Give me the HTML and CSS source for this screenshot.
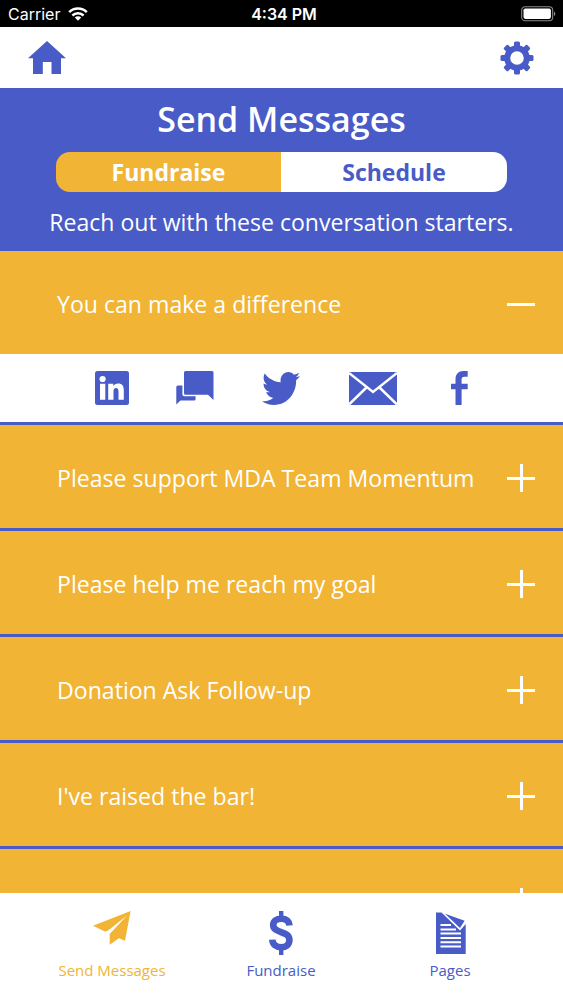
FILE: index.html
```html
<!DOCTYPE html>
<html lang="en">
<head>
    <meta charset="UTF-8">
    <meta name="viewport" content="width=device-width, initial-scale=1.0">
    <title>Send Messages</title>
    <link rel="stylesheet" href="styles.css">
</head>
<body>
    <!-- Status bar -->
    <div class="status-bar">
        <div class="carrier">
            <span>Carrier</span>
            <svg width="20" height="14" viewBox="0 0 20 14" stroke="#fff" stroke-width="2.5">
                <path d="M1.2 5.2a12.6 12.6 0 0 1 17.6 0" fill="none"/>
                <path d="M4.4 8.5a8 8 0 0 1 11.2 0" fill="none"/>
                <path d="M10 13.8l-3.2-3.3a4.6 4.6 0 0 1 6.4 0z" fill="#fff" stroke="none"/>
            </svg>
        </div>
        <div class="time">4:34 PM</div>
        <div class="battery">
            <svg width="35" height="16" viewBox="0 0 35 16">
                <rect x="0.7" y="0.7" width="31" height="14" rx="3.5" fill="none" stroke="#8a8a8a" stroke-width="1.1"/>
                <rect x="2.5" y="2.5" width="27.4" height="10.4" rx="1.8" fill="#fff"/>
                <path d="M33 5.4c1.8.8 1.8 3.8 0 4.6z" fill="#8a8a8a"/>
            </svg>
        </div>
    </div>

    <nav class="top-nav">
        <svg width="38" height="33" viewBox="0 0 38 33">
            <path d="M19 0L38 17.2H33V33H23.5V21H14.8V33H5V17.2H0z"/>
        </svg>
        <svg width="34" height="34" viewBox="-17 -17 34 34">
            <circle r="9.8" fill="none" stroke="#485bc7" stroke-width="6"/>
            <g id="teeth">
                <rect x="-3" y="-16.5" width="6" height="6" rx="1.5"/>
                <rect x="-3" y="10.5" width="6" height="6" rx="1.5"/>
                <rect x="-16.5" y="-3" width="6" height="6" rx="1.5"/>
                <rect x="10.5" y="-3" width="6" height="6" rx="1.5"/>
            </g>
            <use href="#teeth" transform="rotate(45)"/>
        </svg>
    </nav>

    <header class="header">
        <h1>Send Messages</h1>
        <div class="tabs">
            <button class="tab active">Fundraise</button>
            <button class="tab">Schedule</button>
        </div>
        <p>Reach out with these conversation starters.</p>
    </header>

    <!-- Conversation starters -->
    <main class="messages">
        <div class="message open">
            <span>You can make a difference</span>
            <i class="toggle minus"></i>
        </div>
        <div class="share">
            <svg width="34" height="34" viewBox="0 0 34 34">
                <rect width="34" height="34" rx="2.5"/>
                <circle cx="7.6" cy="8" r="3.1" fill="#fff"/>
                <path d="M5 12.8H10.3V28.7H5zM13.2 12.8H18.2V15C19.2 13.3 20.9 12.4 23 12.4C27.3 12.4 28.8 15 28.8 19.4V28.7H23.5V20.6C23.5 18.2 22.8 17 21 17C19.2 17 18.5 18.4 18.5 20.6V28.7H13.2z" fill="#fff"/>
            </svg>
            <svg width="38" height="34" viewBox="0 0 38 34">
                <path d="M9.5 0H36a1.5 1.5 0 0 1 1.5 1.5V29L32 23.7H9.5A1.5 1.5 0 0 1 8 22.2V1.5A1.5 1.5 0 0 1 9.5 0z"/>
                <path d="M6.4 14.5V23.5a1.8 1.8 0 0 0 1.8 1.8H19.6V28a1.5 1.5 0 0 1-1.5 1.5H4.5L.3 33.4V16a1.5 1.5 0 0 1 1.5-1.5z"/>
            </svg>
            <svg width="38" height="33" viewBox="0 48 512 416" preserveAspectRatio="none">
                <path d="M459.37 151.716c.325 4.548.325 9.097.325 13.645 0 138.72-105.583 298.558-298.558 298.558-59.452 0-114.68-17.219-161.137-47.106 8.447.974 16.568 1.299 25.34 1.299 49.055 0 94.213-16.568 130.274-44.832-46.132-.975-84.792-31.188-98.112-72.772 6.498.974 12.995 1.624 19.818 1.624 9.421 0 18.843-1.3 27.614-3.573-48.081-9.747-84.143-51.98-84.143-102.985v-1.299c13.969 7.797 30.214 12.67 47.431 13.319-28.264-18.843-46.781-51.005-46.781-87.391 0-19.492 5.197-37.36 14.294-52.954 51.655 63.675 129.3 105.258 216.365 109.807-1.624-7.797-2.599-15.918-2.599-24.04 0-57.828 46.782-104.934 104.934-104.934 30.213 0 57.502 12.67 76.67 33.137 23.715-4.548 46.456-13.32 66.599-25.34-7.798 24.366-24.366 44.833-46.132 57.827 21.117-2.273 41.584-8.122 60.426-16.243-14.292 20.791-32.161 39.308-52.628 54.253z"/>
            </svg>
            <svg width="48" height="33" viewBox="0 0 48 33">
                <rect width="48" height="33"/>
                <path d="M0 1L24 20L48 1M0 32.5L17.5 15.5M48 32.5L30.5 15.5" fill="none" stroke="#fff" stroke-width="2.5"/>
            </svg>
            <svg width="17" height="34" viewBox="0 0 17 34">
                <path d="M4.5 34V18.2H0V12.7H4.5V8.5C4.5 3 7.5 0 12.3 0H16.7V5.7H13.4C11.3 5.7 10.6 6.8 10.6 8.8V12.7H16.7V18.2H10.6V34z"/>
            </svg>
        </div>
        <div class="message">
            <span>Please support MDA Team Momentum</span>
            <i class="toggle"></i>
        </div>
        <div class="message">
            <span>Please help me reach my goal</span>
            <i class="toggle"></i>
        </div>
        <div class="message">
            <span>Donation Ask Follow-up</span>
            <i class="toggle"></i>
        </div>
        <div class="message">
            <span>I've raised the bar!</span>
            <i class="toggle"></i>
        </div>
        <div class="message">
            <span></span>
            <i class="toggle"></i>
        </div>
    </main>

    <!-- Bottom navigation -->
    <footer class="bottom-nav">
        <a class="nav-item active">
            <svg width="38" height="44" viewBox="0 0 38 44">
                <path d="M37.6 0L0 14.8L11.8 20.4L14.8 19.8L34 4.5L16.7 23V33.8L25.8 27.2L32 29.8z"/>
            </svg>
            <span>Send Messages</span>
        </a>
        <a class="nav-item">
            <svg width="24" height="44" viewBox="0 0 24 44">
                <path d="M20.5 14.5C20 9.8 17 7.8 12.3 7.8C7.5 7.8 4.2 10 4.2 14C4.2 23 20.4 19 20.4 29C20.4 33.8 17 36.2 12.3 36.2C7 36.2 3.6 33.6 3.3 28.6" fill="none" stroke="#485bc7" stroke-width="6.6"/>
                <path d="M10 0h4.4v6h-4.4zM10 38h4.4v6h-4.4z"/>
            </svg>
            <span>Fundraise</span>
        </a>
        <a class="nav-item">
            <svg class="page-icon" width="30" height="44" viewBox="0 0 30 44">
                <path d="M0 1.5H5.5L24 19.5L29.7 13V43H0z"/>
                <path d="M9 2.7L28.6 9.8L24 17z"/>
                <path d="M4.5 14H15M4.5 18.4H20M4.5 22.6H25M4.5 27H25M4.5 31.3H25M4.5 35.6H25" stroke="#fff" stroke-width="2"/>
            </svg>
            <span>Pages</span>
        </a>
    </footer>
</body>
</html>
```
FILE: styles.css
```css
:root {
    --blue: #485bc7;
    --gold: #f1b434;
    --white: #fff;
}
* {
    box-sizing: border-box;
}
body {
    font-family: 'Open Sans', Arial, sans-serif;
    background: var(--white);
    color: var(--white);
    height: 100vh;
    margin: 0;
    display: flex;
    flex-direction: column;
    overflow: hidden;
}
svg {
    display: block;
    fill: var(--blue);
}

/* Status bar */
.status-bar {
    flex: none;
    display: grid;
    grid-template-columns: 1fr auto 1fr;
    align-items: center;
    height: 27px;
    padding: 1px 7px 0 8px;
    background: #000;
    font-family: 'Inter', Arial, sans-serif;
    font-size: 16px;
}
.carrier {
    display: flex;
    align-items: center;
    gap: 8px;
}
.time {
    padding-left: 4px;
    font-weight: 600;
}
.battery {
    justify-self: end;
}

.top-nav {
    flex: none;
    display: flex;
    align-items: center;
    justify-content: space-between;
    height: 61px;
    padding: 0 29px 0 28px;
}

/* Header */
.header {
    flex: none;
    height: 163px;
    background: var(--blue);
    text-align: center;
}
h1 {
    margin: 0;
    padding-top: 7px;
    font-size: 34px;
    font-weight: 600;
    line-height: 48px;
}
.tabs {
    display: flex;
    width: 451px;
    height: 40px;
    margin: 9px auto 0 56px;
    border-radius: 14px;
    overflow: hidden;
}
.tab {
    flex: 1;
    padding: 0;
    border: none;
    background: var(--white);
    color: var(--blue);
    font-family: inherit;
    font-size: 23px;
    font-weight: 700;
    cursor: pointer;
}
.tab.active {
    flex: 0 0 225px;
    background: var(--gold);
    color: var(--white);
}
.header p {
    margin: 13px 0 0;
    font-size: 23.05px;
    line-height: 34px;
}

/* Messages */
.messages {
    flex: 1;
    min-height: 0;
    overflow: hidden;
}
.message {
    display: flex;
    align-items: center;
    justify-content: space-between;
    height: 106px;
    padding: 3px 28px 0 57px;
    background: var(--gold);
    border-bottom: 3px solid var(--blue);
    font-size: 23.1px;
    white-space: nowrap;
}
.message.open {
    height: 103px;
    border-bottom: none;
}
.toggle {
    width: 28px;
    height: 28px;
    background:
        linear-gradient(var(--white), var(--white)) center / 28px 3px no-repeat,
        linear-gradient(var(--white), var(--white)) center / 3px 28px no-repeat;
}
.toggle.minus {
    background: linear-gradient(var(--white), var(--white)) center / 28px 3px no-repeat;
}
.share {
    display: grid;
    grid-template-columns: 81px 86px 87px 102px 17px;
    align-items: center;
    height: 71px;
    padding-left: 95px;
    border-bottom: 3px solid var(--blue);
}

/* Bottom navigation */
.bottom-nav {
    flex: none;
    display: grid;
    grid-template-columns: repeat(3, 169px);
    justify-content: center;
    height: 107px;
    padding: 18px 1px 0 0;
}
.nav-item {
    display: flex;
    flex-direction: column;
    align-items: center;
    gap: 4px;
    color: var(--blue);
    font-size: 15px;
    line-height: 22px;
}
.nav-item.active {
    color: var(--gold);
}
.nav-item.active svg {
    fill: var(--gold);
}
.page-icon {
    margin-left: 2px;
}
```
